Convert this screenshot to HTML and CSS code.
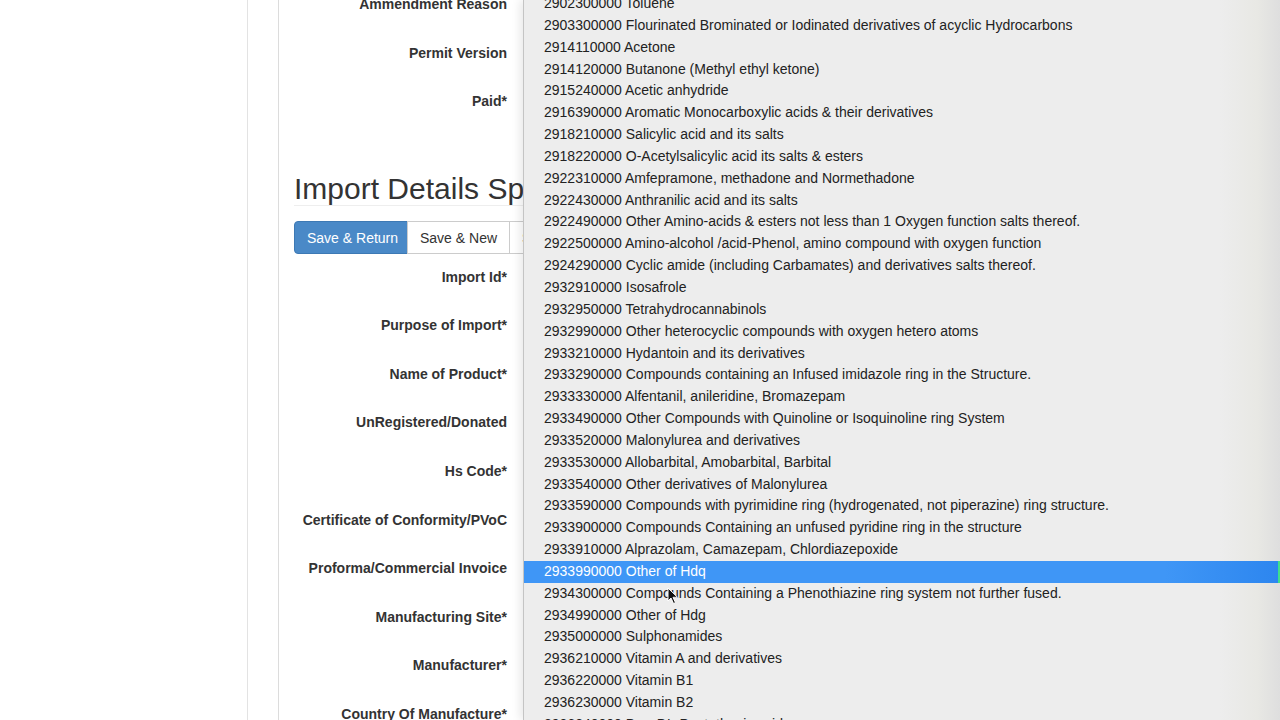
FILE: index.html
```html
<!DOCTYPE html>
<html lang="en">
<head>
  <meta charset="UTF-8">
  <title>Import Details</title>
  <link rel="stylesheet" href="styles.css">
</head>
<body>
<div class="page">
  <aside class="sidebar"></aside>
  <div class="gutter"></div>
  <main class="panel">
    <div class="form-block first">
      <div class="form-row"><label>Ammendment Reason</label></div>
      <div class="form-row"><label>Permit Version</label></div>
      <div class="form-row"><label>Paid*</label></div>
    </div>

    <h2 class="page-header">Import Details Specification</h2>

    <div class="btn-group">
      <button class="btn btn-primary">Save &amp; Return</button>
      <button class="btn">Save &amp; New</button>
      <button class="btn">Save</button>
    </div>

    <div class="form-block">
      <div class="form-row"><label>Import Id*</label></div>
      <div class="form-row"><label>Purpose of Import*</label></div>
      <div class="form-row"><label>Name of Product*</label></div>
      <div class="form-row"><label>UnRegistered/Donated</label></div>
      <div class="form-row"><label>Hs Code*</label></div>
      <div class="form-row"><label>Certificate of Conformity/PVoC</label></div>
      <div class="form-row"><label>Proforma/Commercial Invoice</label></div>
      <div class="form-row"><label>Manufacturing Site*</label></div>
      <div class="form-row"><label>Manufacturer*</label></div>
      <div class="form-row"><label>Country Of Manufacture*</label></div>
    </div>
  </main>
</div>

<!-- open Hs Code dropdown -->
<ul class="select-list">
  <li>2902300000 Toluene</li>
  <li>2903300000 Flourinated Brominated or Iodinated derivatives of acyclic Hydrocarbons</li>
  <li>2914110000 Acetone</li>
  <li>2914120000 Butanone (Methyl ethyl ketone)</li>
  <li>2915240000 Acetic anhydride</li>
  <li>2916390000 Aromatic Monocarboxylic acids &amp; their derivatives</li>
  <li>2918210000 Salicylic acid and its salts</li>
  <li>2918220000 O-Acetylsalicylic acid its salts &amp; esters</li>
  <li>2922310000 Amfepramone, methadone and Normethadone</li>
  <li>2922430000 Anthranilic acid and its salts</li>
  <li>2922490000 Other Amino-acids &amp; esters not less than 1 Oxygen function salts thereof.</li>
  <li>2922500000 Amino-alcohol /acid-Phenol, amino compound with oxygen function</li>
  <li>2924290000 Cyclic amide (including Carbamates) and derivatives salts thereof.</li>
  <li>2932910000 Isosafrole</li>
  <li>2932950000 Tetrahydrocannabinols</li>
  <li>2932990000 Other heterocyclic compounds with oxygen hetero atoms</li>
  <li>2933210000 Hydantoin and its derivatives</li>
  <li>2933290000 Compounds containing an Infused imidazole ring in the Structure.</li>
  <li>2933330000 Alfentanil, anileridine, Bromazepam</li>
  <li>2933490000 Other Compounds with Quinoline or Isoquinoline ring System</li>
  <li>2933520000 Malonylurea and derivatives</li>
  <li>2933530000 Allobarbital, Amobarbital, Barbital</li>
  <li>2933540000 Other derivatives of Malonylurea</li>
  <li>2933590000 Compounds with pyrimidine ring (hydrogenated, not piperazine) ring structure.</li>
  <li>2933900000 Compounds Containing an unfused pyridine ring in the structure</li>
  <li>2933910000 Alprazolam, Camazepam, Chlordiazepoxide</li>
  <li class="selected">2933990000 Other of Hdq</li>
  <li>2934300000 Compounds Containing a Phenothiazine ring system not further fused.</li>
  <li>2934990000 Other of Hdg</li>
  <li>2935000000 Sulphonamides</li>
  <li>2936210000 Vitamin A and derivatives</li>
  <li>2936220000 Vitamin B1</li>
  <li>2936230000 Vitamin B2</li>
  <li>2936240000 D-or DL-Pantothenic acid</li>
</ul>

<svg class="cursor" width="12" height="18" viewBox="0 0 12 18">
  <path d="M1 1 L1 14 L4 11 L6.5 16.5 L8.5 15.6 L6 10.3 L10.5 10.3 Z" fill="#111" stroke="#fff" stroke-width="1"/>
</svg>
</body>
</html>
```

FILE: styles.css
```css
html, body {
  margin: 0;
  height: 720px;
  overflow: hidden;
}

body {
  background: #fff;
  font-family: "Liberation Sans", Arial, sans-serif;
  font-size: 14px;
  color: #333;
  position: relative;
}

.page {
  display: flex;
  height: 720px;
}

.sidebar {
  width: 247px;
  border-right: 1px solid #e3e3e3;
  flex-shrink: 0;
}

.gutter {
  width: 30px;
  flex-shrink: 0;
}

.panel {
  flex: 1;
  border-left: 1px solid #dcdcdc;
  padding: 0 15px;
}

.form-block.first {
  margin-top: -13px;
}

.form-row {
  display: flex;
  height: 34px;
  margin-bottom: 14.6px;
}

.form-row label {
  width: 213px;
  text-align: right;
  font-weight: bold;
  line-height: 20px;
  padding-top: 7px;
}

/* last row margin collapses into this one */
.page-header {
  margin: 54px 0 15px;
  padding-bottom: 0;
  font-size: 30px;
  font-weight: normal;
  line-height: 33px;
  color: #333;
  border-bottom: 1px solid #eee;
  white-space: nowrap;
}

.btn-group {
  display: flex;
  margin-bottom: 5.5px;
}

.btn {
  font-family: inherit;
  font-size: 14px;
  height: 33px;
  padding: 0 12px;
  background: #fff;
  color: #333;
  border: 1px solid #ccc;
  margin-left: -1px;
  white-space: nowrap;
}

.btn-primary {
  background: #4a89c7;
  border-color: #3d79b4;
  color: #fff;
  margin-left: 0;
  border-radius: 4px 0 0 4px;
  width: 114px;
}

.select-list {
  position: absolute;
  top: 0;
  left: 523px;
  right: 0;
  bottom: 0;
  margin: 0;
  padding: 0;
  list-style: none;
  overflow: hidden;
  background: linear-gradient(to right, #ededed 92%, #e8e8e4 97%, #dedede 100%);
  border-left: 1px solid #c4c4c4;
  box-shadow: -4px 0 8px rgba(0, 0, 0, 0.08);
  color: #222;
}

.select-list li {
  height: 21.85px;
  line-height: 21.85px;
  padding-left: 20px;
  white-space: nowrap;
}

.select-list li:first-child {
  margin-top: -7px;
}

.select-list li.selected {
  background: linear-gradient(to right, #3f96f6 85%, #2d86ef 100%);
  color: #fff;
  border-right: 2px solid #3ee08c;
}

.cursor {
  position: absolute;
  left: 667px;
  top: 587px;
}
```
